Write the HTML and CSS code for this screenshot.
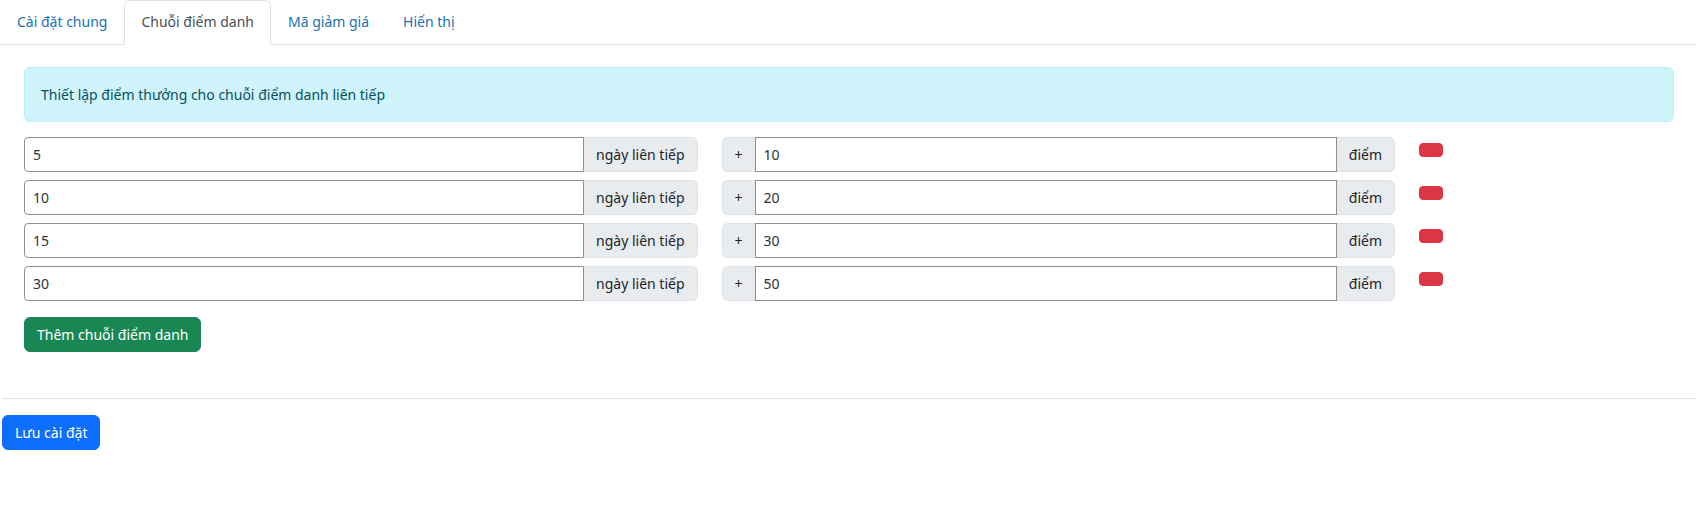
FILE: index.html
```html
<!DOCTYPE html>
<html lang="vi">
<head>
<meta charset="utf-8">
<title>Cài đặt điểm danh</title>
<link rel="stylesheet" href="styles.css">
</head>
<body>
<div class="wrap">
  <ul class="tabs">
    <li><a class="tab-link" href="#">Cài đặt chung</a></li>
    <li><a class="tab-link active" href="#">Chuỗi điểm danh</a></li>
    <li><a class="tab-link" href="#">Mã giảm giá</a></li>
    <li><a class="tab-link" href="#">Hiển thị</a></li>
  </ul>
  <div class="panel">
    <div class="alert">Thiết lập điểm thưởng cho chuỗi điểm danh liên tiếp</div>

    <div class="streak-row">
      <div class="col col-5">
        <div class="input-group">
          <input class="form-control first" type="text" value="5">
          <span class="addon last">ngày liên tiếp</span>
        </div>
      </div>
      <div class="col col-5">
        <div class="input-group">
          <span class="addon first">+</span>
          <input class="form-control" type="text" value="10">
          <span class="addon last">điểm</span>
        </div>
      </div>
      <div class="col col-2"><button class="btn-del" type="button"></button></div>
    </div>

    <div class="streak-row">
      <div class="col col-5">
        <div class="input-group">
          <input class="form-control first" type="text" value="10">
          <span class="addon last">ngày liên tiếp</span>
        </div>
      </div>
      <div class="col col-5">
        <div class="input-group">
          <span class="addon first">+</span>
          <input class="form-control" type="text" value="20">
          <span class="addon last">điểm</span>
        </div>
      </div>
      <div class="col col-2"><button class="btn-del" type="button"></button></div>
    </div>

    <div class="streak-row">
      <div class="col col-5">
        <div class="input-group">
          <input class="form-control first" type="text" value="15">
          <span class="addon last">ngày liên tiếp</span>
        </div>
      </div>
      <div class="col col-5">
        <div class="input-group">
          <span class="addon first">+</span>
          <input class="form-control" type="text" value="30">
          <span class="addon last">điểm</span>
        </div>
      </div>
      <div class="col col-2"><button class="btn-del" type="button"></button></div>
    </div>

    <div class="streak-row">
      <div class="col col-5">
        <div class="input-group">
          <input class="form-control first" type="text" value="30">
          <span class="addon last">ngày liên tiếp</span>
        </div>
      </div>
      <div class="col col-5">
        <div class="input-group">
          <span class="addon first">+</span>
          <input class="form-control" type="text" value="50">
          <span class="addon last">điểm</span>
        </div>
      </div>
      <div class="col col-2"><button class="btn-del" type="button"></button></div>
    </div>

    <button class="btn btn-success add-btn" type="button">Thêm chuỗi điểm danh</button>
  </div>
  <hr class="sep">
  <div class="save">
    <button class="btn btn-primary" type="button">Lưu cài đặt</button>
  </div>
</div>
</body>
</html>
```
FILE: styles.css
```css
* { box-sizing: border-box; }

html, body {
  margin: 0;
  padding: 0;
  background: #ffffff;
}

body {
  font-family: "Noto Sans", "Open Sans", sans-serif;
  font-size: 14px;
  line-height: 21px;
  color: #212529;
}

.wrap {
  width: 1696px;
}

/* Tabs */
.tabs {
  list-style: none;
  margin: 0;
  padding: 0;
  display: flex;
  border-bottom: 1px solid #dee2e6;
}

.tabs li {
  margin-bottom: -1px;
}

.tab-link {
  display: block;
  padding: 10px 16px 12px;
  border: 1px solid transparent;
  border-top-left-radius: 6px;
  border-top-right-radius: 6px;
  color: #2271b1;
  text-decoration: none;
}

.tab-link.active {
  color: #495057;
  background: #ffffff;
  border-color: #dee2e6 #dee2e6 #ffffff;
}

/* Panel */
.panel {
  padding: 22px 22px 22px 24px;
}

.alert {
  padding: 16px;
  margin-bottom: 15px;
  background: #cff4fc;
  border: 1px solid #b6effb;
  border-radius: 6px;
  color: #055160;
}

.streak-row {
  display: flex;
  margin: 0 -12px 8px;
}

.col {
  padding: 0 12px;
}

.col-5 { flex: 0 0 41.666667%; width: 41.666667%; }
.col-2 { flex: 0 0 16.666667%; width: 16.666667%; }

.input-group {
  display: flex;
  align-items: stretch;
  width: 100%;
  height: 35px;
}

.form-control {
  flex: 1 1 auto;
  min-width: 0;
  height: 35px;
  margin: 0;
  padding: 0 8px;
  font-family: inherit;
  font-size: 14px;
  color: #2c3338;
  background: #ffffff;
  border: 1px solid #8c8f94;
  border-radius: 0;
  outline: none;
}

.form-control.first {
  border-top-left-radius: 4px;
  border-bottom-left-radius: 4px;
}

.addon {
  display: flex;
  align-items: center;
  padding: 6px 12px;
  white-space: nowrap;
  color: #212529;
  background: #e9ecef;
  border: 1px solid #dee2e6;
}

.addon.first {
  border-right: 0;
  border-top-left-radius: 6px;
  border-bottom-left-radius: 6px;
}

.addon.last {
  border-left: 0;
  border-top-right-radius: 6px;
  border-bottom-right-radius: 6px;
}

.btn-del {
  display: block;
  width: 24px;
  height: 14px;
  margin-top: 6px;
  padding: 0;
  background: #dc3545;
  border: 1px solid #dc3545;
  border-radius: 4px;
}

/* Buttons */
.btn {
  display: inline-block;
  padding: 6px 12px;
  font-family: inherit;
  font-size: 14px;
  line-height: 21px;
  color: #ffffff;
  border: 1px solid transparent;
  border-radius: 6px;
  cursor: pointer;
}

.btn-success {
  background: #198754;
  border-color: #198754;
}

.btn-primary {
  background: #0d6efd;
  border-color: #0d6efd;
}

.add-btn {
  margin-top: 8px;
}

.sep {
  margin: 24px 0 16px 2px;
  border: 0;
  border-top: 1px solid #dee2e6;
  height: 0;
}

.save {
  padding-left: 2px;
}
```
